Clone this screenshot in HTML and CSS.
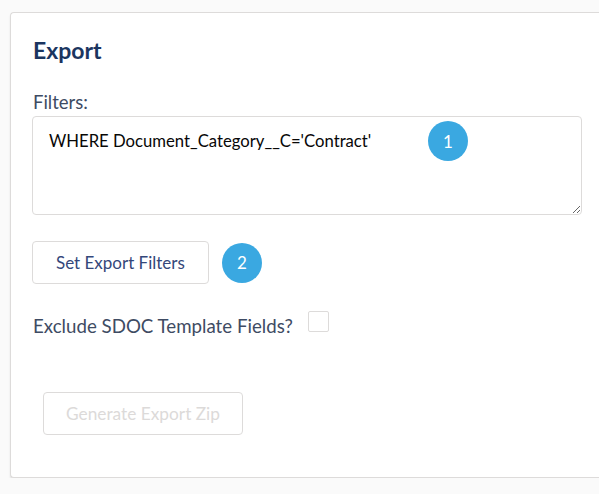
FILE: index.html
```html
<!DOCTYPE html>
<html>
<head>
<meta charset="utf-8">
<link rel="stylesheet" href="styles.css">
</head>
<body>
<div class="card">
  <h2 class="title">Export</h2>
  <div class="label">Filters:</div>
  <div class="field">
    <textarea class="filters">WHERE Document_Category__C='Contract'</textarea>
    <span class="badge badge-one">1</span>
  </div>
  <div class="button-row">
    <button class="btn">Set Export Filters</button>
    <span class="badge">2</span>
  </div>
  <div class="check-row">
    <span class="check-label">Exclude SDOC Template Fields?</span>
    <span class="checkbox"></span>
  </div>
  <div class="generate-row">
    <button class="btn btn-disabled" disabled>Generate Export Zip</button>
  </div>
</div>
</body>
</html>
```
FILE: styles.css
```css
html, body {
  margin: 0;
  padding: 0;
  background: #fafafa;
}
body {
  font-family: Lato, "Open Sans", sans-serif;
  overflow: hidden;
  padding: 12px 0 0 10px;
}
.card {
  width: 589px;
  background: #fff;
  border: 1px solid #dddbda;
  border-right: none;
  border-radius: 4px 0 0 4px;
  box-shadow: 0 2px 2px rgba(0, 0, 0, 0.10);
  padding: 23px 0 42px 22px;
  box-sizing: border-box;
  display: flex;
  flex-direction: column;
  align-items: flex-start;
}
.title {
  margin: 0;
  font-size: 23px;
  line-height: 28px;
  font-weight: 700;
  color: #1b3560;
}
.label {
  margin-top: 27px;
  font-size: 18.5px;
  line-height: 22px;
  color: #3e4b63;
}
.field {
  position: relative;
  margin-top: 3px;
  margin-left: -1px;
}
.filters {
  display: block;
  width: 550px;
  height: 99px;
  box-sizing: border-box;
  border: 1px solid #dddbda;
  border-radius: 4px;
  padding: 14px 16px;
  font-family: Lato, "Open Sans", sans-serif;
  font-size: 16.7px;
  line-height: 21px;
  color: #080707;
  resize: vertical;
  outline: none;
}
.badge {
  width: 40px;
  height: 40px;
  border-radius: 50%;
  background: #3aa8e1;
  color: #fff;
  font-size: 17px;
  display: flex;
  align-items: center;
  justify-content: center;
}
.badge-one {
  position: absolute;
  left: 396px;
  top: 5px;
}
.button-row {
  margin-top: 26px;
  margin-left: -1px;
  display: flex;
  align-items: center;
  gap: 13px;
}
.btn {
  height: 43px;
  padding: 0 23px;
  border: 1px solid #dddbda;
  border-radius: 4px;
  background: #fff;
  font-family: Lato, "Open Sans", sans-serif;
  font-size: 17px;
  color: #34477a;
}
.btn-disabled {
  width: 200px;
  padding: 0;
  font-size: 17.3px;
  color: #dcdad9;
}
.check-row {
  margin-top: 27px;
  display: flex;
  align-items: flex-start;
  gap: 15px;
}
.check-label {
  margin-top: 4px;
  font-size: 18.7px;
  line-height: 22px;
  color: #3e4b63;
}
.checkbox {
  width: 21px;
  height: 21px;
  box-sizing: border-box;
  border: 1px solid #dddbda;
  border-radius: 2px;
  background: #fff;
}
.generate-row {
  margin-top: 55px;
  margin-left: 10px;
}
```
